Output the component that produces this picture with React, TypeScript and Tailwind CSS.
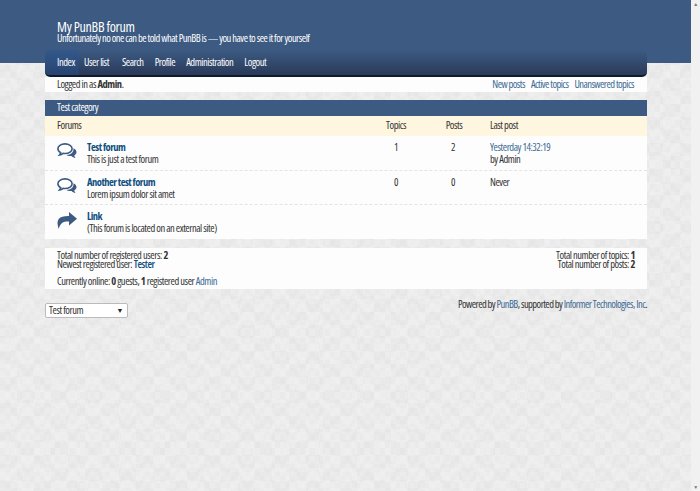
import React from 'react';

// mottled page background, built from offset checker layers
const textureBg =
  'bg-[#eaeaea] bg-[conic-gradient(rgba(255,255,255,.13)_25%,transparent_0_50%,rgba(255,255,255,.13)_0_75%,transparent_0),conic-gradient(rgba(0,0,0,.014)_25%,transparent_0_50%,rgba(0,0,0,.014)_0_75%,transparent_0),conic-gradient(rgba(255,255,255,.12)_25%,transparent_0_50%,rgba(255,255,255,.12)_0_75%,transparent_0)] bg-[length:22px_16px,34px_26px,10px_14px]';

const Comments = () => (
  <svg width="20" height="16" viewBox="0 0 20 16" className="block">
    <path d="M16.400 5.200c1.800.8 3.100 2.200 3.100 3.900 0 1.400-.9 2.600-2.300 3.400.2.900.7 1.900 1.300 2.500-1.600-.2-3-1-4-2-.8.100-1.600.1-2.300 0-1-.2-1.900-.6-2.600-1.100 4.500-.1 7.500-3 6.800-6.700z" fill="#3c5a82" />
    <path d="M8 .9C3.900.9.900 3 .9 5.700c0 1.700 1.100 3 2.800 3.900-.2 1-.7 1.800-1.200 2.400 1.400-.2 2.700-.9 3.600-1.700.6.100 1.200.2 1.900.2 4.100 0 7.100-2.100 7.100-4.800S12.100.9 8 .9z" fill="#fff" stroke="#3c5a82" strokeWidth="1.600" />
  </svg>
);

const Share = () => (
  <svg width="20" height="17" viewBox="0 0 20 17" className="block">
    <path d="M12 0l8 6.800-8 6.700V9.400C6.500 9.200 3 10.800 1.800 17 .300 13.500-.1 9.800 1.700 7c1.900-2.600 5.600-3.200 10.300-3.100z" fill="#3c5a82" />
  </svg>
);

const A = ({ children, bold }: { children: React.ReactNode; bold?: boolean }) => (
  <a className={bold ? 'font-semibold text-[#0f4f80]' : 'text-[#3c6a94]'}>{children}</a>
);

const NavItem = ({ children }: { children: React.ReactNode }) => (
  <span className="ml-[11px] flex items-center">{children}</span>
);

const ForumRow = ({ icon, title, desc, topics, posts, last, h }: { icon: React.ReactNode; title: string; desc: string; topics?: string; posts?: string; last?: React.ReactNode; h: string }) => (
  <div className={`flex ${h} border-b border-dashed border-[#e4e4e4] last:border-b-0`}>
    <div className="w-[42px] pl-[12px] pt-[7px] shrink-0">{icon}</div>
    <div className="w-[298px] pt-[4px] shrink-0">
      <div className="text-[10.5px] leading-[14px] font-bold tracking-[-0.5px] text-[#0f4f80]">{title}</div>
      <div className="leading-[11px]">{desc}</div>
    </div>
    <div className="w-[22px] pt-[4px] text-center leading-[14px] shrink-0">{topics}</div>
    <div className="w-[35px] shrink-0" />
    <div className="w-[22px] pt-[4px] text-center leading-[14px] shrink-0">{posts}</div>
    <div className="pl-[26px] pt-[4px] leading-[14px]">{last}</div>
  </div>
);

export default function App() {
  return (
    <div className={`h-[491px] w-[700px] overflow-hidden flex font-['Open_Sans',sans-serif] [font-stretch:condensed] text-[10.5px] tracking-[-0.45px] text-[#333] ${textureBg}`}>
      <div className="w-[691px] shrink-0">
        <div className="bg-[#3c5a82] h-[63px] pt-[20px] pl-[57px] text-white">
          <div className="text-[14px] leading-[14px] tracking-[-0.3px]">My PunBB forum</div>
          <div className="leading-[9px] font-medium tracking-[-0.5px]">Unfortunately no one can be told what PunBB is — you have to see it for yourself</div>
        </div>

        <div className="w-[602px] ml-[45px] -mt-[13px] relative">
          <nav className="h-[27px] rounded-[5px] flex bg-gradient-to-b from-[#3c5a82] to-[#2a3a5a] border-b-2 border-[#0f1a2c] text-white font-medium overflow-hidden">
            <span className="w-[34px] pl-[12px] bg-gradient-to-b from-[#34588c] to-[#28446f] flex items-center">Index</span>
            <span className="ml-[5px] flex items-center">User list</span>
            <span className="ml-[13px] flex items-center">Search</span>
            <NavItem>Profile</NavItem>
            <NavItem>Administration</NavItem>
            <NavItem>Logout</NavItem>
          </nav>
          <div className="h-[15px] bg-[#fdfdfd] flex justify-between pl-[12px] pr-[13px] leading-[15px]">
            <span>Logged in as <b>Admin</b>.</span>
            <span className="flex gap-[6px] tracking-[-0.55px]"><A>New posts</A><A>Active topics</A><A>Unanswered topics</A></span>
          </div>
          <div className="h-[8px]" />

          <div className="h-[16px] bg-[#3c5a82] text-white pl-[12px] leading-[15px] font-medium">Test category</div>
          <div className="h-[20px] bg-[#fff6e0] flex leading-[19px]">
            <div className="w-[322px] pl-[12px]">Forums</div>
            <div className="w-[58px] text-center">Topics</div>
            <div className="w-[58px] text-center">Posts</div>
            <div className="pl-[7px]">Last post</div>
          </div>
          <div className="bg-[#fdfdfd]">
            <ForumRow h="h-[35px]" icon={<Comments />} title="Test forum" desc="This is just a test forum" topics="1" posts="2" last={<><A>Yesterday 14:32:19</A><div className="leading-[11px]">by Admin</div></>} />
            <ForumRow h="h-[34px]" icon={<Comments />} title="Another test forum" desc="Lorem ipsum dolor sit amet" topics="0" posts="0" last="Never" />
            <ForumRow h="h-[34px]" icon={<Share />} title="Link" desc="(This forum is located on an external site)" />
          </div>

          <div className="h-[9px]" />

          <div className="h-[41px] bg-[#fdfdfd] pl-[12px] pr-[12px] leading-[9px] pt-[3px]">
            <div className="flex justify-between">
              <div>
                <div>Total number of registered users: <b>2</b></div>
                <div>Newest registered user: <A bold>Tester</A></div>
              </div>
              <div className="text-right">
                <div>Total number of topics: <b>1</b></div>
                <div>Total number of posts: <b>2</b></div>
              </div>
            </div>
            <div className="mt-[8px]">Currently online: <b>0</b> guests, <b>1</b> registered user <A>Admin</A></div>
          </div>

          <div className="flex justify-between items-start">
            <div className="mt-[14px] w-[83px] h-[15px] bg-white border border-[#bbb] rounded-[2px] flex items-center justify-between pl-[3px] pr-[4px] leading-none">
              <span>Test forum</span>
              <span className="text-[7px] text-[#222]">▼</span>
            </div>
            <div className="mt-[10px] leading-[10px] tracking-[-0.55px]">Powered by <A>PunBB</A>, supported by <A>Informer Technologies, Inc</A>.</div>
          </div>
        </div>
      </div>

      <div className="w-[9px] h-full bg-[#f1f1f1] flex flex-col items-center justify-between text-[5px] text-[#777] pt-[1px]">
        <span>▲</span>
        <span>▼</span>
      </div>
    </div>
  );
}
